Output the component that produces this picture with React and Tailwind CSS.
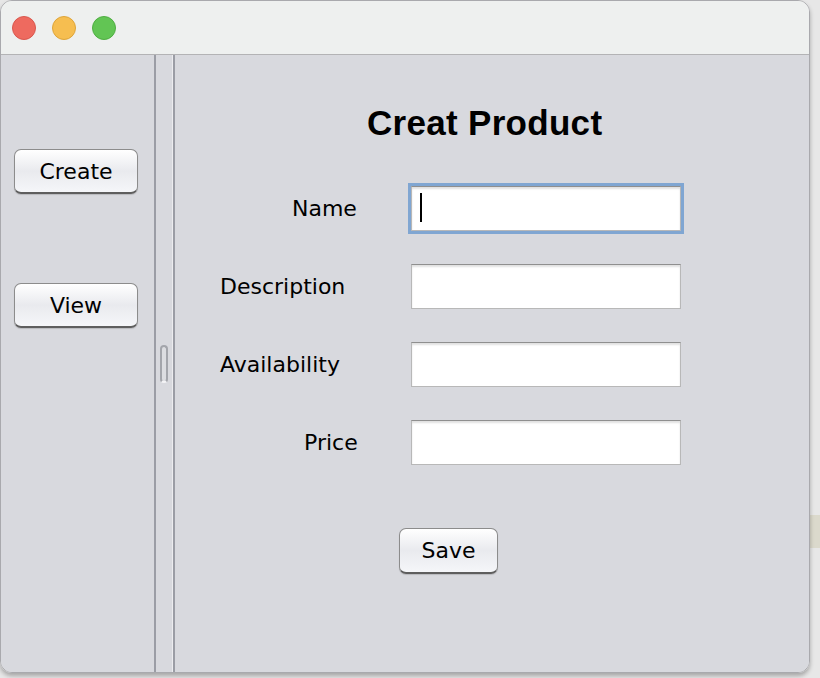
const LABEL_FONT = { fontFamily: '"DejaVu Sans", "Liberation Sans", sans-serif' }

// label offset is measured from the start of the form panel
const FIELDS = [
  { label: 'Name', pad: 'pl-[117px]', focused: true },
  { label: 'Description', pad: 'pl-[45px]' },
  { label: 'Availability', pad: 'pl-[45px]' },
  { label: 'Price', pad: 'pl-[129px]' },
]

function AquaButton({ children, className = '' }) {
  return (
    <button
      className={`flex items-center justify-center rounded-[7px] border border-[#8c8c8c] border-b-[#5e5e5e] border-b-2 bg-gradient-to-b from-white via-[#e9eaee] to-[#f5f6f9] text-[22px] text-black shadow-[0_1px_1px_rgba(0,0,0,0.15)] ${className}`}
      style={LABEL_FONT}
    >
      {children}
    </button>
  )
}

function TextField({ focused }) {
  return (
    <div
      className={`relative w-[270px] h-[45px] bg-white border border-[#b8b8b8] border-t-[#8f8f8f] shadow-[inset_0_2px_2px_rgba(0,0,0,0.12)] ${
        focused ? 'outline outline-[3px] outline-[#80a6d2]' : ''
      }`}
    >
      {focused && <div className="absolute left-[8px] top-[6px] w-[2px] h-[29px] bg-black" />}
    </div>
  )
}

export default function App() {
  return (
    <div className="w-[820px] h-[678px] bg-[#e7e7e7] relative overflow-hidden">
      {/* beige strip of whatever sits behind the window */}
      <div className="absolute right-0 top-[515px] w-[14px] h-[33px] bg-[#dbd9cc]" />

      <div className="relative w-[810px] h-[673px] rounded-[12px] overflow-hidden border border-[#a9a9ad] shadow-[0_3px_4px_rgba(0,0,0,0.28)] flex flex-col">
        {/* Title bar */}
        <div className="h-[54px] shrink-0 bg-[#eef0ef] border-b border-[#b3b3b5] flex items-center gap-[16px] pl-[11px]">
          <span className="w-[24px] h-[24px] rounded-full bg-[#ee6a5f] border border-[#d9584e]" />
          <span className="w-[24px] h-[24px] rounded-full bg-[#f6be50] border border-[#dea53a]" />
          <span className="w-[24px] h-[24px] rounded-full bg-[#62c554] border border-[#4fae42]" />
        </div>

        {/* Body */}
        <div className="flex-1 flex bg-[#d8d9de]">
          {/* Left nav */}
          <div className="w-[153px] shrink-0 pl-[13px] pt-[94px] flex flex-col gap-[89px]">
            <AquaButton className="w-[124px] h-[45px]">Create</AquaButton>
            <AquaButton className="w-[124px] h-[45px]">View</AquaButton>
          </div>

          {/* Split divider */}
          <div className="w-[21px] shrink-0 flex">
            <div className="w-[2px] bg-[#9b9da5]" />
            <div className="flex-1 flex items-center justify-center">
              <div className="w-[8px] h-[38px] rounded-full border-2 border-[#a3a5ab] border-b-[#f4f4f6] bg-[#dcdde1]" />
            </div>
            <div className="w-[1px] bg-[#ececef]" />
            <div className="w-[2px] bg-[#9b9da5]" />
          </div>

          {/* Form */}
          <div className="flex-1 flex flex-col">
            <h1
              className="mt-[50px] pl-[192px] text-[35px] leading-none font-bold tracking-[0.3px] text-black"
              style={{ fontFamily: '"Liberation Sans", Arial, sans-serif' }}
            >
              Creat Product
            </h1>

            <div className="mt-[46px] flex flex-col gap-[33px]">
              {FIELDS.map(f => (
                <div key={f.label} className="flex items-center">
                  <div className={`w-[236px] shrink-0 text-[22px] text-black ${f.pad}`} style={LABEL_FONT}>
                    {f.label}
                  </div>
                  <TextField focused={f.focused} />
                </div>
              ))}
            </div>

            <div className="mt-[63px] pl-[224px]">
              <AquaButton className="w-[99px] h-[46px]">Save</AquaButton>
            </div>
          </div>
        </div>
      </div>
    </div>
  )
}
